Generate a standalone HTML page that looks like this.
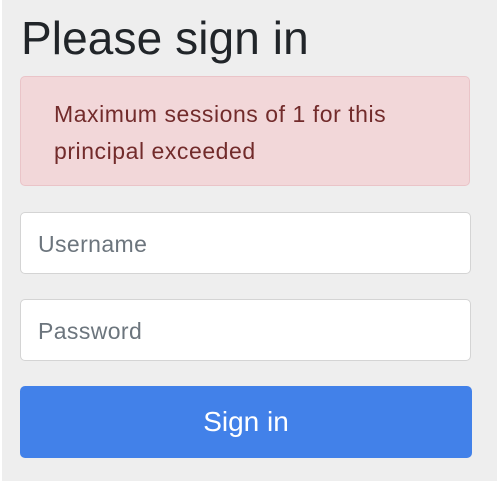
<!DOCTYPE html>
<html><head><style>
html,body{margin:0;padding:0;background:#fff;width:501px;height:482px;overflow:hidden;font-family:"Liberation Sans",sans-serif}
.p{position:absolute;left:2px;top:0;width:495px;height:481px;background:#eeeeee}
h1{position:absolute;left:21px;top:10px;margin:0;font-weight:normal;font-size:46px;color:#212529;line-height:56px;letter-spacing:0.1px}
.a{position:absolute;left:20px;top:76px;width:450px;height:110px;background:#f2d7d9;border:1px solid #eac4c8;border-radius:5px;box-sizing:border-box}
.a div{position:absolute;left:33px;top:19px;font-size:23px;line-height:37px;color:#722b2b;letter-spacing:0.55px}
.i{position:absolute;left:20px;width:451px;height:62px;background:#fff;border:1px solid #d4d4d4;border-radius:5px;box-sizing:border-box;font-size:23px;color:#6c757d;letter-spacing:0.4px}
.i span{position:absolute;left:17px;top:18px}
.b{position:absolute;left:20px;top:386px;width:452px;height:72px;background:#4281e9;border-radius:5px;color:#fff;font-size:28px;text-align:center;line-height:72px}
</style></head><body>
<div class="p"></div>
<h1>Please sign in</h1>
<div class="a"><div>Maximum sessions of 1 for this<br>principal exceeded</div></div>
<div class="i" style="top:212px"><span>Username</span></div>
<div class="i" style="top:299px"><span>Password</span></div>
<div class="b">Sign in</div>
</body></html>
